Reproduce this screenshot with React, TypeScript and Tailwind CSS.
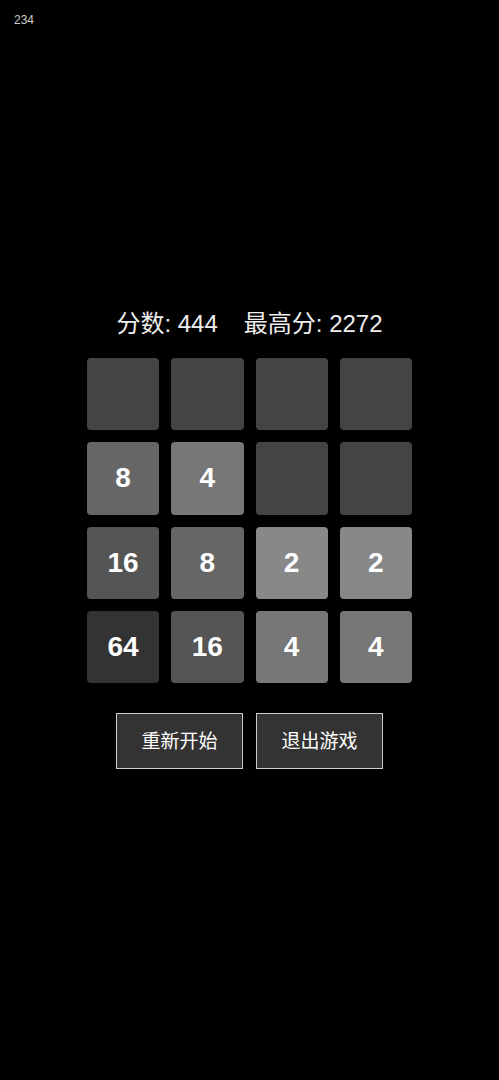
const board: number[][] = [
  [0, 0, 0, 0],
  [8, 4, 0, 0],
  [16, 8, 2, 2],
  [64, 16, 4, 4],
];

const tileColors: Record<number, string> = {
  0: "bg-[#444444]",
  2: "bg-[#888888]",
  4: "bg-[#777777]",
  8: "bg-[#666666]",
  16: "bg-[#555555]",
  32: "bg-[#4a4a4a]",
  64: "bg-[#333333]",
};

export default function App() {
  return (
    <div
      className="min-h-[1080px] w-full bg-black text-white"
      style={{ fontFamily: '"Liberation Sans", "Noto Sans CJK SC", sans-serif' }}
    >
      {/* frame counter */}
      <div className="px-[14px] pt-[13px] text-[12px] leading-[14px] text-[#cccccc]">234</div>

      <div className="mt-[281px] flex flex-col items-center">
        {/* score */}
        <div className="flex items-center text-[24px] leading-[32px] text-[#eeeeee]">
          <span>分数: 444</span>
          <span className="ml-[26px]">最高分: 2272</span>
        </div>

        {/* board */}
        <div className="mt-[18px] grid w-[325px] grid-cols-4 gap-3">
          {board.flat().map((v, i) => (
            <div
              key={i}
              className={`flex aspect-square items-center justify-center rounded-[4px] ${tileColors[v]}`}
            >
              {v > 0 && (
                <span className="text-[28px] font-bold leading-none text-white">{v}</span>
              )}
            </div>
          ))}
        </div>

        {/* actions */}
        <div className="mt-[30px] flex gap-[13px]">
          <button className="h-[56px] w-[127px] border border-[#cccccc] bg-[#333333] pt-[3px] text-[19px] text-white">
            重新开始
          </button>
          <button className="h-[56px] w-[127px] border border-[#cccccc] bg-[#333333] pt-[3px] text-[19px] text-white">
            退出游戏
          </button>
        </div>
      </div>
    </div>
  );
}
